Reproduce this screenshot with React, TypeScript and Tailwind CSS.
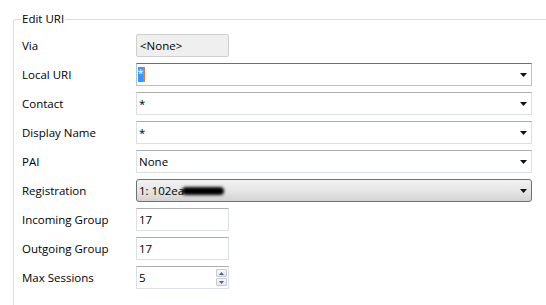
import React from 'react';

const font = { fontFamily: '"Open Sans", "Noto Sans", sans-serif' };

const Arrow = () => (
  <svg width="7" height="4" viewBox="0 0 7 4" className="shrink-0">
    <path d="M0 0h7L3.5 4z" fill="#111" />
  </svg>
);

const Label = ({ children }: { children: React.ReactNode }) => (
  <div className="w-[114px] shrink-0 text-[11.5px] text-black">{children}</div>
);

const Combo = ({ value }: { value: React.ReactNode }) => (
  <div className="flex h-[23px] w-[396px] items-center justify-between border border-[#dbdfe6] border-t-[#abadb3] bg-white pl-[2px] pr-[4px]">
    <span className="text-[11.5px] text-black">{value}</span>
    <Arrow />
  </div>
);

const TextBox = ({ value, children }: { value: string; children?: React.ReactNode }) => (
  <div className="flex h-[23px] w-[93px] items-center justify-between border border-[#dbdfe6] border-t-[#abadb3] bg-white pl-[2px] pr-[1px]">
    <span className="text-[11.5px] text-black">{value}</span>
    {children}
  </div>
);

export default function App() {
  return (
    <div className="h-[305px] w-[546px] overflow-hidden bg-white" style={font}>
      <fieldset className="ml-[13px] mt-[11px] h-[320px] rounded-tl-[3px] border-l border-t border-[#d5dfe5] pl-[7px]">
        <legend className="px-[1px] text-[11.5px] leading-[16px] text-black">Edit URI</legend>

        <div className="mt-[7px] flex flex-col gap-[6px] pl-[1px]">
          <div className="flex items-center">
            <Label>Via</Label>
            <div className="flex h-[23px] w-[93px] items-center rounded-[2px] border border-[#cfcfcf] bg-[#efefef] pl-[3px] text-[11.5px] text-black">
              &lt;None&gt;
            </div>
          </div>

          <div className="flex items-center">
            <Label>Local URI</Label>
            <div className="flex h-[23px] w-[396px] items-center justify-between border border-[#a4c9e3] border-t-[#3d7bad] bg-white pl-[1px] pr-[4px]">
              <span className="flex h-[15px] w-[7px] items-start justify-center border-r-[2px] border-[#e07b2a] bg-[#3399ff] text-[11px] leading-[12px] text-white">
                *
              </span>
              <Arrow />
            </div>
          </div>

          <div className="flex items-center">
            <Label>Contact</Label>
            <Combo value="*" />
          </div>

          <div className="flex items-center">
            <Label>Display Name</Label>
            <Combo value="*" />
          </div>

          <div className="flex items-center">
            <Label>PAI</Label>
            <Combo value="None" />
          </div>

          <div className="flex items-center">
            <Label>Registration</Label>
            <div className="flex h-[23px] w-[396px] items-center justify-between rounded-[3px] border border-[#707070] bg-gradient-to-b from-[#f2f2f2] via-[#e6e6e6] to-[#d3d3d3] pl-[2px] pr-[4px]">
              <span className="flex items-center text-[11.5px] text-black">
                1: 102ea
                <span className="-ml-[2px] inline-block h-[8px] w-[42px] rounded-full bg-black blur-[1.5px]" />
              </span>
              <Arrow />
            </div>
          </div>

          <div className="flex items-center">
            <Label>Incoming Group</Label>
            <TextBox value="17" />
          </div>

          <div className="flex items-center">
            <Label>Outgoing Group</Label>
            <TextBox value="17" />
          </div>

          <div className="flex items-center">
            <Label>Max Sessions</Label>
            <TextBox value="5">
              <div className="flex w-[11px] flex-col gap-[1px]">
                <div className="flex h-[8px] items-center justify-center rounded-[1px] border border-[#c3cad6] bg-gradient-to-b from-[#f7f9fc] to-[#e2e7ef]">
                  <svg width="5" height="3" viewBox="0 0 5 3">
                    <path d="M0 3h5L2.5 0z" fill="#4e5e84" />
                  </svg>
                </div>
                <div className="flex h-[8px] items-center justify-center rounded-[1px] border border-[#c3cad6] bg-gradient-to-b from-[#f7f9fc] to-[#e2e7ef]">
                  <svg width="5" height="3" viewBox="0 0 5 3">
                    <path d="M0 0h5L2.5 3z" fill="#4e5e84" />
                  </svg>
                </div>
              </div>
            </TextBox>
          </div>
        </div>
      </fieldset>
    </div>
  );
}
